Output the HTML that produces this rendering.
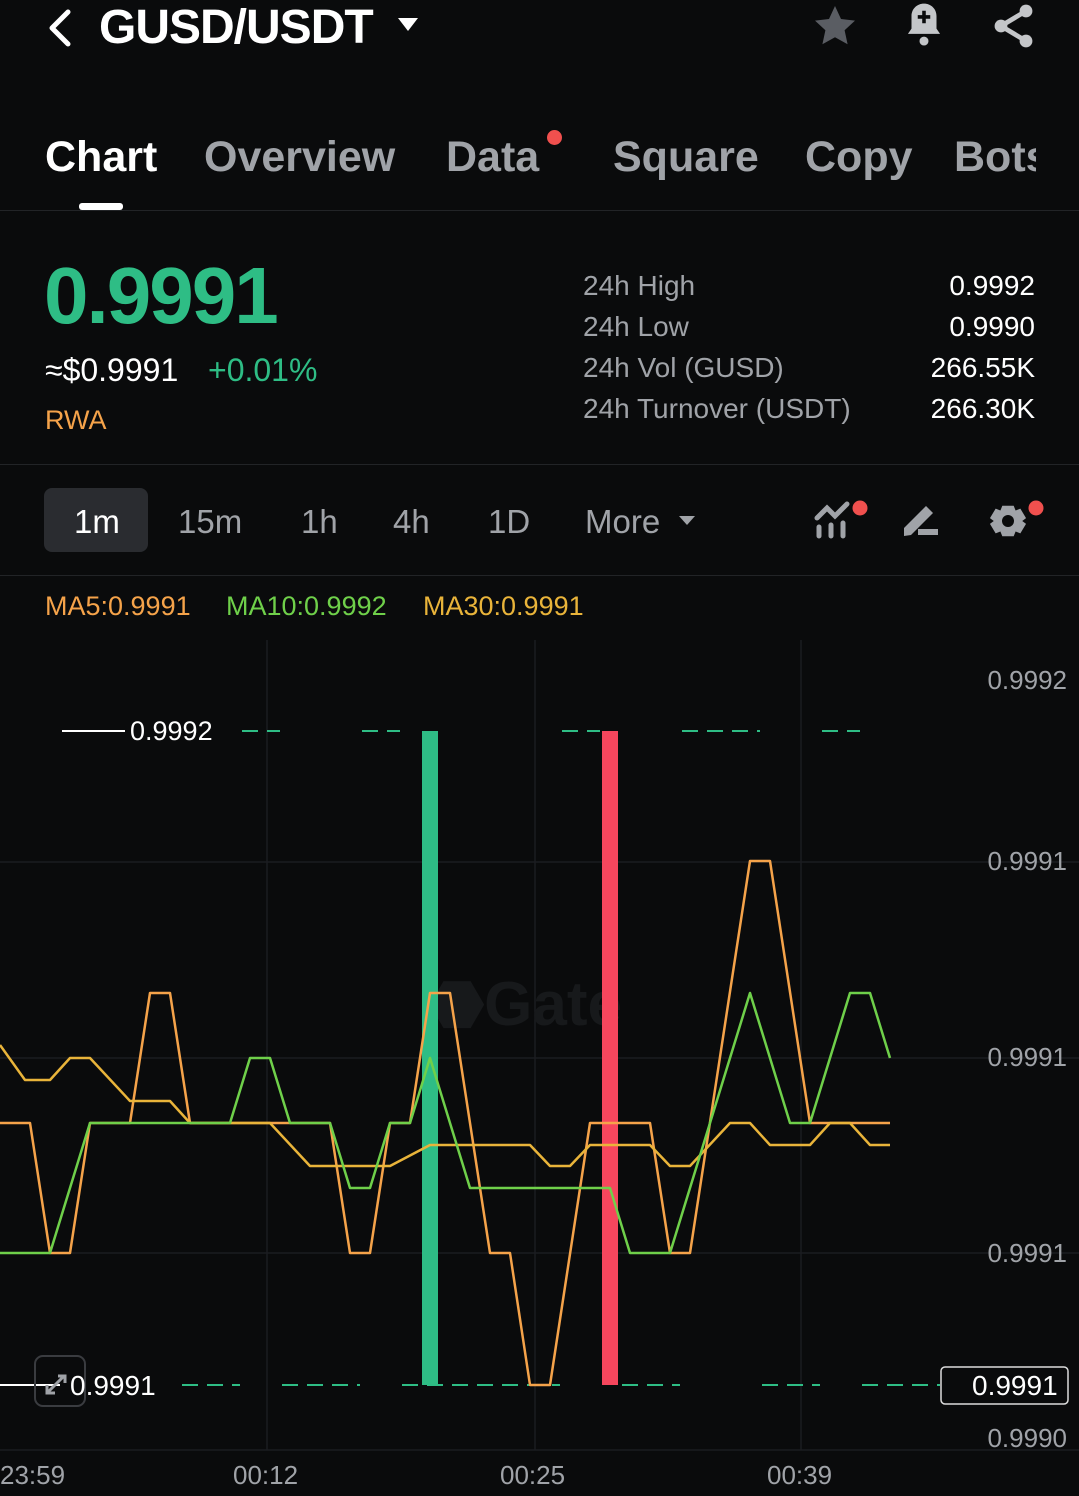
<!DOCTYPE html>
<html><head><meta charset="utf-8"><style>
body{margin:0;width:1079px;height:1496px;background:#0a0b0c;font-family:"Liberation Sans",sans-serif;position:relative;overflow:hidden;color:#fff}
.a{position:absolute;white-space:nowrap}
.g{color:#a0a3a8}
</style></head><body>
<svg class="a" style="left:44px;top:8px" width="30" height="40"><path d="M24 4 L8 20 L24 36" stroke="#fff" stroke-width="5" fill="none" stroke-linecap="round" stroke-linejoin="round"/></svg>
<div class="a" style="left:99px;top:0px;font-size:48px;font-weight:bold;letter-spacing:-1px">GUSD/USDT</div>
<svg class="a" style="left:397px;top:17px" width="22" height="16"><path d="M1 1 H21 L11 14Z" fill="#fff"/></svg>
<svg class="a" style="left:810px;top:2px" width="50" height="48" viewBox="0 0 24 24"><path d="M12 2l3 6.5 7 .8-5.2 4.8 1.5 7L12 17.6 5.7 21.1l1.5-7L2 9.3l7-.8z" fill="#5a5d63"/></svg>
<svg class="a" style="left:902px;top:0px" width="44" height="50" viewBox="0 0 24 28"><path d="M12 2c-4 0-7 3-7 7v7l-2 3h18l-2-3V9c0-4-3-7-7-7z" fill="#c4c6c9"/><circle cx="12" cy="23" r="2.5" fill="#c4c6c9"/><path d="M12 6v7M8.5 9.5h7" stroke="#0a0b0c" stroke-width="2"/></svg>
<svg class="a" style="left:990px;top:2px" width="48" height="48" viewBox="0 0 24 24"><circle cx="18" cy="4.5" r="3.2" fill="#c4c6c9"/><circle cx="5.5" cy="12" r="3.2" fill="#c4c6c9"/><circle cx="18" cy="19.5" r="3.2" fill="#c4c6c9"/><path d="M18 4.5L5.5 12 18 19.5" stroke="#c4c6c9" stroke-width="2.4" fill="none"/></svg>

<div class="a" style="left:45px;top:133px;font-size:43px;font-weight:bold">Chart</div>
<div class="a g" style="left:204px;top:133px;font-size:43px;font-weight:bold">Overview</div>
<div class="a g" style="left:446px;top:133px;font-size:43px;font-weight:bold">Data</div>
<div class="a" style="left:547px;top:130px;width:15px;height:15px;border-radius:50%;background:#f0504e"></div>
<div class="a g" style="left:613px;top:133px;font-size:43px;font-weight:bold">Square</div>
<div class="a g" style="left:805px;top:133px;font-size:43px;font-weight:bold">Copy</div>
<div class="a g" style="left:954px;top:133px;font-size:43px;font-weight:bold;width:82px;overflow:hidden">Bots</div>
<div class="a" style="left:79px;top:203px;width:44px;height:7px;border-radius:3px;background:#fff"></div>
<div class="a" style="left:0;top:210px;width:1079px;height:1px;background:#222427"></div>

<div class="a" style="left:44px;top:250px;font-size:80px;font-weight:bold;color:#2ebd85;letter-spacing:-2px">0.9991</div>
<div class="a" style="left:45px;top:352px;font-size:32px">≈$0.9991</div>
<div class="a" style="left:208px;top:352px;font-size:32px;color:#2ebd85">+0.01%</div>
<div class="a" style="left:45px;top:405px;font-size:27px;color:#f5a34a">RWA</div>
<div class="a g" style="left:583px;top:265px;font-size:28px;line-height:41px">24h High<br>24h Low<br>24h Vol (GUSD)<br>24h Turnover (USDT)</div>
<div class="a" style="right:44px;top:265px;font-size:28px;line-height:41px;text-align:right">0.9992<br>0.9990<br>266.55K<br>266.30K</div>
<div class="a" style="left:0;top:464px;width:1079px;height:1px;background:#222427"></div>

<div class="a" style="left:44px;top:488px;width:104px;height:64px;border-radius:8px;background:#2a2c30"></div>
<div class="a" style="left:74px;top:503px;font-size:33px">1m</div>
<div class="a g" style="left:178px;top:503px;font-size:33px">15m</div>
<div class="a g" style="left:301px;top:503px;font-size:33px">1h</div>
<div class="a g" style="left:393px;top:503px;font-size:33px">4h</div>
<div class="a g" style="left:488px;top:503px;font-size:33px">1D</div>
<div class="a g" style="left:585px;top:503px;font-size:33px">More</div>
<svg class="a" style="left:678px;top:515px" width="18" height="12"><path d="M1 1H17L9 10Z" fill="#a0a3a8"/></svg>
<svg class="a" style="left:812px;top:500px" width="60" height="40"><path d="M5 18l10-10 8 8 12-12" stroke="#a0a3a8" stroke-width="5" fill="none" stroke-linecap="round"/><path d="M7 27v9M19 25v11M31 23v13" stroke="#a0a3a8" stroke-width="5" stroke-linecap="round"/><circle cx="48" cy="8" r="7.5" fill="#f0504e"/></svg>
<svg class="a" style="left:900px;top:500px" width="40" height="40"><path d="M4 36V28L26 6l7 7-22 22z" fill="#a0a3a8"/><rect x="18" y="29" width="20" height="6" fill="#a0a3a8"/></svg>
<svg class="a" style="left:988px;top:496px" width="60" height="46"><g transform="translate(20,25)"><path d="M-6-16h12l2 5 5-2 6 10-4 3 4 3-6 10-5-2-2 5h-12l-2-5-5 2-6-10 4-3-4-3 6-10 5 2z" fill="#a0a3a8" transform="scale(.95)"/><circle r="6" fill="#0a0b0c"/></g><circle cx="48" cy="12" r="7.5" fill="#f0504e"/></svg>
<div class="a" style="left:0;top:575px;width:1079px;height:1px;background:#222427"></div>

<div class="a" style="left:45px;top:591px;font-size:27px;color:#f5a34a">MA5:0.9991</div>
<div class="a" style="left:226px;top:591px;font-size:27px;color:#6fd04a">MA10:0.9992</div>
<div class="a" style="left:423px;top:591px;font-size:27px;color:#e9b43a">MA30:0.9991</div>

<svg class="a" style="left:0;top:0" width="1079" height="1496">
<g stroke="#1b1d20" stroke-width="1.5"><line x1="267" y1="640" x2="267" y2="1450"/><line x1="535" y1="640" x2="535" y2="1450"/><line x1="801" y1="640" x2="801" y2="1450"/><line x1="0" y1="862" x2="1079" y2="862"/><line x1="0" y1="1058" x2="1079" y2="1058"/><line x1="0" y1="1253" x2="1079" y2="1253"/><line x1="0" y1="1450" x2="1079" y2="1450"/></g>
<text x="430" y="1025" font-family="Liberation Sans" font-weight="bold" font-size="62" fill="#17191b">⬣Gate</text>
<g stroke="#2ebd85" stroke-width="2" stroke-dasharray="16,9"><line x1="242" y1="731" x2="280" y2="731"/><line x1="362" y1="731" x2="400" y2="731"/><line x1="562" y1="731" x2="600" y2="731"/><line x1="682" y1="731" x2="760" y2="731"/><line x1="822" y1="731" x2="860" y2="731"/>
<line x1="182" y1="1385" x2="240" y2="1385"/><line x1="282" y1="1385" x2="360" y2="1385"/><line x1="402" y1="1385" x2="560" y2="1385"/><line x1="622" y1="1385" x2="680" y2="1385"/><line x1="762" y1="1385" x2="820" y2="1385"/><line x1="862" y1="1385" x2="940" y2="1385"/></g>
<line x1="62" y1="731" x2="125" y2="731" stroke="#fff" stroke-width="2"/>
<line x1="0" y1="1385" x2="60" y2="1385" stroke="#fff" stroke-width="2"/>
<rect x="422" y="731" width="16" height="654" fill="#2ebd85"/>
<rect x="602" y="731" width="16" height="654" fill="#f6465d"/>
<g fill="none" stroke-width="2.5" stroke-linejoin="round">
<polyline stroke="#f5a34a" points="0,1123 30,1123 50,1253 70,1253 90,1123 130,1123 150,993 170,993 190,1123 330,1123 350,1253 370,1253 390,1123 410,1123 430,993 450,993 490,1253 510,1253 530,1385 550,1385 590,1123 650,1123 670,1253 690,1253 750,861 770,861 810,1123 890,1123"/>
<polyline stroke="#e9b43a" points="0,1045 25,1080 50,1080 70,1058 90,1058 130,1101 170,1101 190,1123 270,1123 310,1166 390,1166 430,1145 530,1145 550,1166 570,1166 590,1145 650,1145 670,1166 690,1166 730,1123 750,1123 770,1145 810,1145 830,1123 850,1123 870,1145 890,1145"/>
<polyline stroke="#6fd04a" points="0,1253 50,1253 90,1123 230,1123 250,1058 270,1058 290,1123 330,1123 350,1188 370,1188 390,1123 410,1123 430,1058 470,1188 610,1188 630,1253 670,1253 750,993 790,1123 810,1123 850,993 870,993 890,1058"/>
</g>
<rect x="35" y="1356" width="50" height="50" rx="8" fill="none" stroke="#3a3c40" stroke-width="2"/>
<path d="M48 1392l16-16M58 1376h7v7M47 1385v8h8" stroke="#a0a3a8" stroke-width="3" fill="none"/>
<rect x="941" y="1367" width="127" height="37" rx="4" fill="#0a0b0c" stroke="#ddd" stroke-width="1.5"/>
</svg>
<div class="a" style="left:130px;top:716px;font-size:27px">0.9992</div>
<div class="a" style="left:70px;top:1370px;font-size:28px">0.9991</div>
<div class="a" style="left:972px;top:1370px;font-size:28px">0.9991</div>
<div class="a g" style="right:12px;top:665px;font-size:26px">0.9992</div>
<div class="a g" style="right:12px;top:846px;font-size:26px">0.9991</div>
<div class="a g" style="right:12px;top:1042px;font-size:26px">0.9991</div>
<div class="a g" style="right:12px;top:1238px;font-size:26px">0.9991</div>
<div class="a g" style="right:12px;top:1423px;font-size:26px">0.9990</div>
<div class="a g" style="left:0;top:1460px;font-size:26px">23:59</div>
<div class="a g" style="left:233px;top:1460px;font-size:26px">00:12</div>
<div class="a g" style="left:500px;top:1460px;font-size:26px">00:25</div>
<div class="a g" style="left:767px;top:1460px;font-size:26px">00:39</div>
</body></html>
